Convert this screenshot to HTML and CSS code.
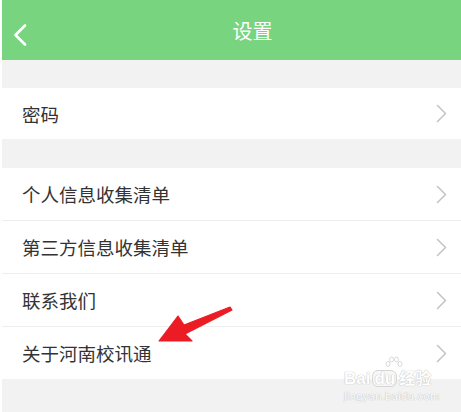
FILE: index.html
```html
<!DOCTYPE html>
<html lang="zh-CN">

<head>
    <meta charset="UTF-8">
    <meta name="viewport" content="width=device-width, initial-scale=1.0">
    <title>设置</title>
    <link rel="stylesheet" href="styles.css">
</head>

<body>
    <div class="screen">
        <header class="topbar">
            <svg class="back" width="14" height="22" viewBox="0 0 14 22">
                <polyline points="12,1.5 2.5,11 12,20.5" fill="none" stroke="#fff" stroke-width="2.6" stroke-linecap="round" stroke-linejoin="round" />
            </svg>
            <h1 class="title">设置</h1>
        </header>

        <div class="gap"></div>

        <ul class="group">
            <li class="row single"><span>密码</span><svg class="chev" width="11" height="19" viewBox="0 0 11 19"><polyline points="1.5,1.5 9.5,9.5 1.5,17.5" /></svg></li>
        </ul>

        <div class="gap gap-2"></div>

        <ul class="group">
            <li class="row"><span>个人信息收集清单</span><svg class="chev" width="11" height="19" viewBox="0 0 11 19"><polyline points="1.5,1.5 9.5,9.5 1.5,17.5" /></svg></li>
            <li class="row"><span>第三方信息收集清单</span><svg class="chev" width="11" height="19" viewBox="0 0 11 19"><polyline points="1.5,1.5 9.5,9.5 1.5,17.5" /></svg></li>
            <li class="row"><span>联系我们</span><svg class="chev" width="11" height="19" viewBox="0 0 11 19"><polyline points="1.5,1.5 9.5,9.5 1.5,17.5" /></svg></li>
            <li class="row"><span>关于河南校讯通</span><svg class="chev" width="11" height="19" viewBox="0 0 11 19"><polyline points="1.5,1.5 9.5,9.5 1.5,17.5" /></svg></li>
        </ul>

        <!-- annotation arrow -->
        <svg class="arrow" width="80" height="40" viewBox="0 0 80 40">
            <polygon points="74,3 76,6 29,30 36,37 3,37 22,12 28,21" fill="#ec1c24" stroke="#ec1c24" stroke-width="1.2" stroke-linejoin="round" />
        </svg>

        <div class="mark">
            <svg class="paw" width="18" height="14" viewBox="0 0 18 14">
                <g fill="#fff" stroke="#cfcfcf" stroke-width="0.8">
                    <ellipse cx="3" cy="8" rx="2" ry="2.5" />
                    <ellipse cx="6.5" cy="3.5" rx="2" ry="2.5" />
                    <ellipse cx="11.5" cy="3.5" rx="2" ry="2.5" />
                    <ellipse cx="15" cy="8" rx="2" ry="2.5" />
                </g>
            </svg>
            <div class="mark-top">Bai<b>du</b><span class="mark-cn">经验</span></div>
            <div class="mark-url">jingyan.baidu.com</div>
        </div>
    </div>
</body>

</html>
```

FILE: styles.css
```css
html,
body {
    margin: 0;
    padding: 0;
    background: #fff;
}

.screen {
    position: relative;
    width: 459px;
    height: 412px;
    margin-left: 2px;
    background: #f2f2f2;
    font-family: "Noto Sans CJK SC", "Noto Sans", sans-serif;
    overflow: hidden;
}

/* Top bar */

.topbar {
    height: 60px;
    background: #78d47f;
    display: flex;
    align-items: center;
    justify-content: center;
    position: relative;
}

.back {
    position: absolute;
    left: 11px;
    top: 24px;
}

.title {
    margin: 0;
    margin-left: 42px;
    color: #fff;
    font-size: 20px;
    font-weight: normal;
}

.gap {
    height: 28px;
}

.gap-2 {
    height: 29px;
}

/* List rows */

.group {
    list-style: none;
    margin: 0;
    padding: 0;
    background: #fff;
}

.row {
    box-sizing: border-box;
    height: 53px;
    display: flex;
    align-items: center;
    justify-content: space-between;
    padding: 0 14px 0 20px;
    font-size: 18.5px;
    color: #333;
    border-bottom: 1px solid #ededed;
}

.row:last-child {
    border-bottom: none;
    height: 52px;
}

.row.single {
    height: 51px;
}

.chev polyline {
    fill: none;
    stroke: #c2c2c2;
    stroke-width: 1.5;
    stroke-linecap: round;
    stroke-linejoin: round;
}

/* Overlays */

.arrow {
    position: absolute;
    left: 154px;
    top: 304px;
}

.mark {
    position: absolute;
    left: 342px;
    top: 356px;
    color: #fff;
    text-shadow: 0 0 1px #bdbdbd, 0 0 1px #bdbdbd;
    font-family: "Liberation Sans", "Noto Sans CJK SC", sans-serif;
}

.paw {
    display: block;
    margin-left: 41px;
}

.mark-top {
    font-size: 17px;
    font-weight: bold;
    line-height: 18px;
}

.mark-top b {
    display: inline-block;
    background: #f7f7f7;
    border: 1px solid #d6d6d6;
    border-radius: 6px;
    padding: 0 1px;
    line-height: 15px;
    margin: 0 2px;
}

.mark-cn {
    font-size: 16px;
}

.mark-url {
    font-size: 11px;
    line-height: 16px;
    letter-spacing: 0.4px;
}
```
